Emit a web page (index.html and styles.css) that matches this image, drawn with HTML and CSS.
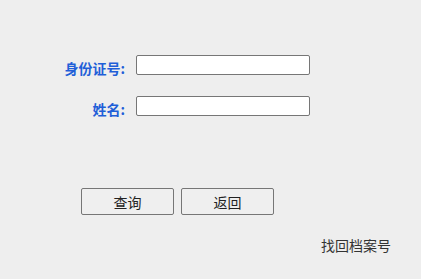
FILE: index.html
```html
<!DOCTYPE html>
<html lang="zh-CN">
  <head>
    <meta charset="UTF-8" />
    <title>档案查询</title>
    <link rel="stylesheet" href="styles.css">
  </head>
  <body>
    <div class="query-form">
      <div class="form-row">
        <label class="form-label" for="id-no">身份证号:</label>
        <input id="id-no" class="form-input" type="text" />
      </div>
      <div class="form-row">
        <label class="form-label" for="name">姓名:</label>
        <input id="name" class="form-input" type="text" />
      </div>
      <div class="form-actions">
        <button class="form-btn">查询</button>
        <button class="form-btn">返回</button>
      </div>
      <div class="form-links">
        <a class="find-link" href="#">找回档案号</a>
      </div>
    </div>
  </body>
</html>
```

FILE: styles.css
```css
* {
  margin: 0;
  padding: 0;
  box-sizing: border-box;
}

body {
  font-family: "Noto Sans CJK SC", "Liberation Sans", sans-serif;
  font-size: 14px;
  background: #eeeeee;
  color: #333;
  width: 421px;
  height: 279px;
  overflow: hidden;
}

.query-form {
  padding-top: 55px;
}

.form-row {
  display: flex;
  align-items: center;
  height: 20px;
  margin-bottom: 21px;
}

.form-label {
  width: 125px;
  margin-right: 11px;
  text-align: right;
  font-weight: bold;
  color: #1f5fd8;
  font-size: 14px;
  line-height: 20px;
  padding-top: 5px;
}

.form-input {
  width: 174px;
  height: 20px;
  border: 1px solid #767676;
  border-radius: 2px;
  background: #fff;
  padding: 0 4px;
  font-size: 13px;
}

.form-actions {
  display: flex;
  gap: 7px;
  padding-left: 81px;
  margin-top: 72px;
}

.form-btn {
  width: 93px;
  height: 27px;
  border: 1px solid #767676;
  border-radius: 2px;
  background: #efefef;
  font-family: inherit;
  font-size: 14px;
  font-weight: normal;
  color: #222;
}

.form-links {
  display: flex;
  justify-content: flex-end;
  padding-right: 30px;
  margin-top: 21px;
}

.find-link {
  color: #333;
  text-decoration: none;
  font-size: 14px;
  line-height: 18px;
}
```
